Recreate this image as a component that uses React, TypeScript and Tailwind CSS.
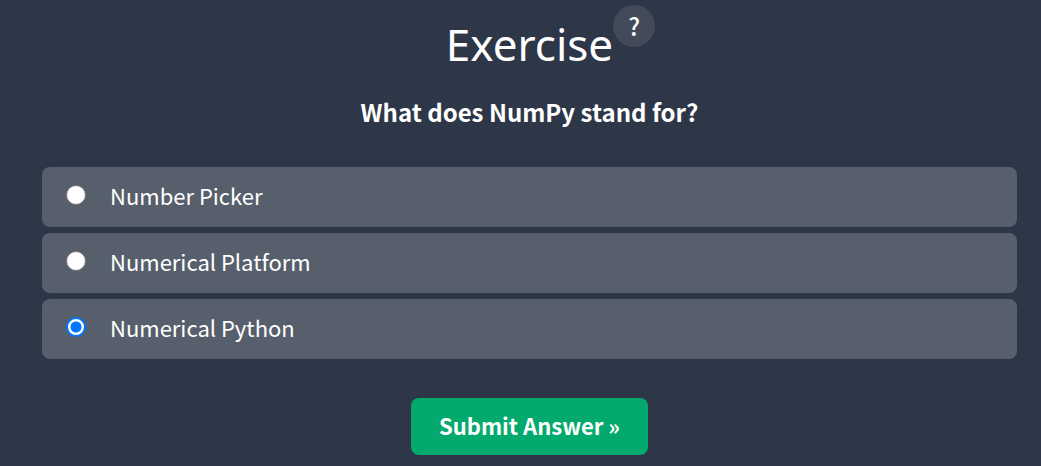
const options = ["Number Picker", "Numerical Platform", "Numerical Python"];

export default function App() {
  return (
    <main className="min-h-screen bg-[#2e3748] pt-1 pr-6 pl-[42px] pb-[11px] font-['Noto_Sans_CJK_SC','Noto_Sans',sans-serif] text-white">
      <form className="flex flex-col items-center" onSubmit={(e) => e.preventDefault()}>
        <h1 className="relative mt-2 font-['Noto_Sans',sans-serif] text-[44px] leading-[64px]">
          Exercise
          <button
            type="button"
            aria-label="Help"
            className="absolute -top-[7px] left-full size-[42px] rounded-full bg-[#434b5a] font-['Noto_Sans_CJK_SC',sans-serif] text-2xl leading-[42px] font-medium"
          >
            ?
          </button>
        </h1>
        <fieldset className="mt-[18px] w-full">
          <legend className="mx-auto text-2xl leading-9 font-bold">What does NumPy stand for?</legend>
          <div className="mt-[37px] flex flex-col gap-1.5">
            {options.map((option) => (
              <label key={option} className="flex h-[60px] items-center rounded-lg bg-[#585f6c] pb-1 pl-6 text-[22px] leading-9">
                <input
                  type="radio"
                  name="answer"
                  value={option}
                  defaultChecked={option === "Numerical Python"}
                  className="mr-6 size-5 appearance-none rounded-full border border-[#767676] bg-white checked:border-2 checked:border-[#0075ff] checked:bg-[radial-gradient(circle,#0075ff_5px,white_6px)]"
                />
                {option}
              </label>
            ))}
          </div>
        </fieldset>
        <button type="submit" className="mt-[39px] h-[57px] rounded-lg bg-[#04aa6d] px-7 pb-0.5 text-[22px] font-bold">
          Submit Answer »
        </button>
      </form>
    </main>
  );
}
